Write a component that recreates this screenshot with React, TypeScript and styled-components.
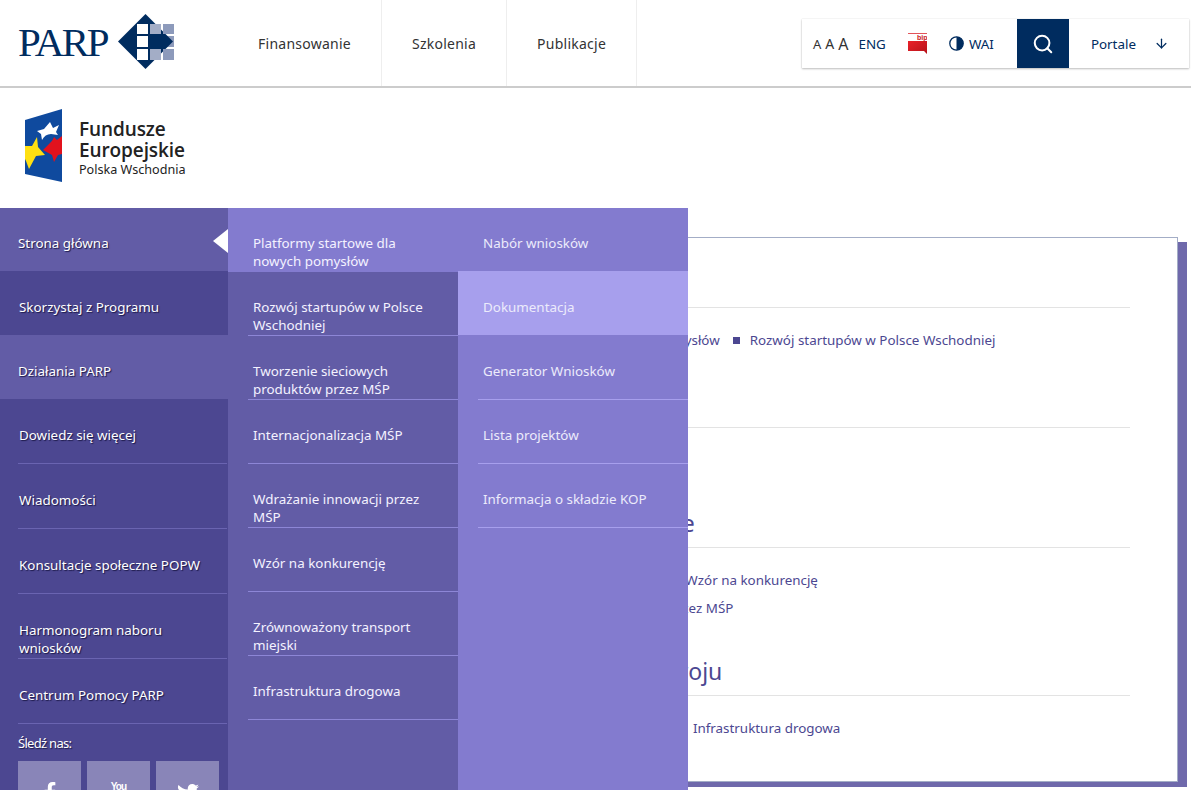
import React from "react";
import styled, { createGlobalStyle } from "styled-components";
import { FaFacebookF, FaTwitter } from "react-icons/fa";
import { ArrowDown, Search } from "lucide-react";

const GlobalStyle = createGlobalStyle`
    html, body {
        margin: 0;
        height: 100%;
        overflow: hidden;
        background: #fff;
        font-family: "Noto Sans", "Open Sans", sans-serif;
    }
`;

const Page = styled.div`
    position: relative;
    width: 1191px;
    height: 790px;
    overflow: hidden;
`;

const Header = styled.header`
    display: flex;
    align-items: flex-start;
    height: 86px;
    border-bottom: 2px solid #ccc;
`;

const Brand = styled.div`
    display: flex;
    align-items: center;
    width: 228px;
    height: 86px;
    padding: 0 0 2px 18px;
    box-sizing: border-box;
`;

const BrandName = styled.span`
    font-family: "Liberation Serif", serif;
    font-size: 41px;
    letter-spacing: -2.4px;
    color: #002c5f;
    width: 100px;
`;

const Nav = styled.nav`
    display: flex;
    flex: 1;
`;

const NavItem = styled.a`
    display: flex;
    align-items: center;
    height: 86px;
    padding: 0 30px;
    font-size: 14px;
    letter-spacing: 0.25px;
    color: #333;
    border-right: 1px solid #eee;
`;

const Tools = styled.div`
    display: flex;
    align-items: center;
    width: 387px;
    height: 49px;
    margin: 19px 2px 0 0;
    padding-left: 11px;
    box-sizing: border-box;
    background: #fff;
    box-shadow: 0 1px 2px rgba(0, 0, 0, 0.25), 0 0 1px rgba(0, 0, 0, 0.15);
    color: #002c5f;
    font-size: 13.4px;
`;

const FontSize = styled.span<{ size: number }>`
    font-size: ${p => p.size}px;
    margin-right: 4px;
    color: #333;
`;

const Eng = styled.span`
    margin: 0 22px 0 6px;
`;

const Wai = styled.span`
    display: flex;
    align-items: center;
    gap: 5px;
    margin-left: 22px;
    width: 68px;
`;

const SearchButton = styled.button`
    display: flex;
    align-items: center;
    justify-content: center;
    width: 52px;
    height: 49px;
    border: 0;
    padding: 0;
    background: #002c5f;
    color: #fff;
`;

const Portals = styled.span`
    display: flex;
    align-items: center;
    gap: 18px;
    margin-left: 22px;
`;

const FundsBand = styled.div`
    display: flex;
    align-items: flex-start;
    height: 102px;
    box-sizing: border-box;
    padding: 21px 0 0 25px;
    gap: 16px;
`;

const FundsText = styled.div`
    display: flex;
    flex-direction: column;
    padding-top: 10px;
    color: #222;
`;

const FundsTitle = styled.span`
    font-family: "Open Sans", sans-serif;
    font-size: 19px;
    line-height: 20.5px;
    font-weight: 600;
    letter-spacing: -0.1px;
`;

const FundsSub = styled.span`
    font-size: 12.6px;
    line-height: 20px;
`;

const Content = styled.main`
    display: flex;
    margin-top: 47px;
    justify-content: flex-end;
`;

const Card = styled.article`
    width: 780px;
    height: 545px;
    margin-right: 13px;
    padding: 0 47px 0 59px;
    box-sizing: border-box;
    background: #fff;
    border: 1px solid #a3adc6;
    box-shadow: 9px 5px 0 #6f69ab;
    color: #4c4791;
    font-size: 13.4px;
`;

const Title = styled.div<{ height: number }>`
    display: flex;
    align-items: flex-end;
    height: ${p => p.height}px;
    box-sizing: border-box;
    border-bottom: 1px solid #e3e3e3;
`;

const Heading = styled.h2`
    margin: 0 0 8px;
    font-size: 23px;
    font-weight: 400;
    line-height: 32px;
    letter-spacing: -0.05px;
    white-space: nowrap;
`;

const LinkList = styled.div<{ height: number; ruled?: boolean }>`
    height: ${p => p.height}px;
    box-sizing: border-box;
    padding-top: 18px;
    white-space: nowrap;
    border-bottom: ${p => (p.ruled ? "1px solid #e3e3e3" : "0")};
`;

const LinkLine = styled.div`
    display: flex;
    align-items: center;
    height: 28px;
`;

const Bullet = styled.i`
    width: 7px;
    height: 7px;
    margin: 0 10px 0 13px;
    background: #4c4791;
`;

const Menu = styled.div`
    position: absolute;
    left: 0;
    top: 208px;
    display: grid;
    grid-template-columns: 228px 230px 230px;
    height: 582px;
    color: #fff;
    font-size: 13.4px;
    line-height: 18px;
`;

const MainColumn = styled.div`
    background: #4c4791;
    text-shadow: 1px 1px 1px #1d1a4a;
`;

const SubColumn = styled.div`
    background: #625ca6;
    color: #f4f2ff;
`;

const ThirdColumn = styled.div`
    background: #837bcf;
    color: #ecebfb;
`;

const MainItem = styled.a<{ active?: boolean; rows: number; ruled?: boolean }>`
    position: relative;
    display: flex;
    align-items: flex-start;
    height: ${p => p.rows}px;
    box-sizing: border-box;
    padding: ${p => (p.rows === 63 ? 26 : 27)}px 28px 0 ${p => (p.active ? 18 : 19)}px;
    background: ${p => (p.active ? "#625ca6" : "transparent")};
    &::after {
        content: "";
        display: ${p => (p.ruled ? "block" : "none")};
        position: absolute;
        left: 18px;
        right: 1px;
        bottom: 0;
        height: 1px;
        background: #6a64b1;
    }
`;

const Pointer = styled.i`
    position: absolute;
    right: 0;
    top: 21px;
    border: 12px solid transparent;
    border-left: 0;
    border-right: 15px solid #fff;
`;

const SubItem = styled.a<{ active?: boolean; ruled?: boolean; rule?: string }>`
    position: relative;
    display: flex;
    align-items: flex-start;
    height: 64px;
    box-sizing: border-box;
    padding: 26px 20px 0 25px;
    background: ${p => (p.active ? "#837bcf" : "transparent")};
    &::after {
        content: "";
        display: ${p => (p.ruled ? "block" : "none")};
        position: absolute;
        left: 20px;
        right: 0;
        bottom: 0;
        height: 1px;
        background: ${p => p.rule ?? "#8d86d6"};
    }
`;

const HoverItem = styled(SubItem)`
    margin: -1px 0 1px;
    padding-top: 27px;
    background: #a79fed;
`;

const FollowLabel = styled.div`
    padding: 10px 0 0 18px;
    font-size: 13px;
    letter-spacing: -0.7px;
    line-height: 18px;
`;

const Socials = styled.div`
    display: flex;
    gap: 6px;
    margin: 9px 0 0 18px;
`;

const Social = styled.a`
    display: flex;
    flex-direction: column;
    align-items: center;
    width: 63px;
    height: 63px;
    padding-top: 21px;
    box-sizing: border-box;
    background: #8985b8;
    color: #fff;
    text-shadow: none;
`;

const YoutubeMark = styled.span`
    font-family: "Liberation Sans", sans-serif;
    font-size: 10px;
    font-weight: 700;
    letter-spacing: -0.9px;
    line-height: 9px;
`;

const main = [
    { label: "Strona główna", rows: 63, active: true, pointer: true },
    { label: "Skorzystaj z Programu", rows: 64 },
    { label: "Działania PARP", rows: 64, active: true },
    { label: "Dowiedz się więcej", rows: 65, ruled: true },
    { label: "Wiadomości", rows: 65, ruled: true },
    { label: "Konsultacje społeczne POPW", rows: 65, ruled: true },
    { label: "Harmonogram naboru wniosków", rows: 65, ruled: true },
    { label: "Centrum Pomocy PARP", rows: 65, ruled: true },
];

const sub = [
    "Platformy startowe dla nowych pomysłów",
    "Rozwój startupów w Polsce Wschodniej",
    "Tworzenie sieciowych produktów przez MŚP",
    "Internacjonalizacja MŚP",
    "Wdrażanie innowacji przez MŚP",
    "Wzór na konkurencję",
    "Zrównoważony transport miejski",
    "Infrastruktura drogowa",
];

const third = ["Generator Wniosków", "Lista projektów", "Informacja o składzie KOP"];

const ParpMark = () => (
    <svg width="57" height="57" viewBox="0 0 57 57">
        <path d="M27.5 0 L55 27.5 L27.5 55 L0 27.5 Z" fill="#002c5f" />
        <path d="M19 10h11v10H19zM19 22h11v11H19zM19 35h11v11H19z" fill="#fff" />
        <path d="M32 10h11v10H32zM32 35h11v11H32z" fill="#a3adc6" />
        <path d="M45 10h11v10H45zM45 22h11v11H45zM45 35h11v11H45z" fill="#8d9abb" />
        <path d="M30 22 H49.5 L55 27.5 L49.5 33 H30 Z" fill="#002c5f" />
    </svg>
);

const FundsMark = () => (
    <svg width="38" height="74" viewBox="0 0 38 74">
        <path d="M0 11 L37 0 V73 L0 65 Z" fill="#0f4a9e" />
        <path d="M25 13 L28 19 L34 16 L31 23 L33 26 L26 25 C22 25 19 27 17 31 L16 25 L12 22 L19 20 Z" fill="#fff" />
        <path d="M18 41 L24 35 C26 33 28 31 29 28 L32 31 L37 27 V45 L33 46 L29 53 L27 46 Z" fill="#e2121d" />
        <path d="M0 37 L7 37 L12 28 L13 38 L20 46 L11 47 L4 60 L1 52 L0 50 Z" fill="#ffe012" />
    </svg>
);

const BipMark = () => (
    <svg width="19" height="21" viewBox="0 0 19 21">
        <defs>
            <linearGradient id="bip-red" x1="0" y1="0" x2="1" y2="1">
                <stop offset="0" stopColor="#ea2129" />
                <stop offset="1" stopColor="#b5131a" />
            </linearGradient>
        </defs>
        <path d="M0 0h19v1H0z" fill="#e2545a" />
        <path d="M0 8h19v13l-3-3H0z" fill="url(#bip-red)" />
        <text x="9" y="7" fontFamily="Liberation Sans" fontSize="7" fontWeight="700" fill="#c8161d">
            bip
        </text>
    </svg>
);

const ContrastMark = () => (
    <svg width="15" height="15" viewBox="0 0 15 15">
        <circle cx="7.5" cy="7.5" r="6.7" fill="#fff" stroke="#002c5f" strokeWidth="1.3" />
        <path d="M7.5 .8a6.7 6.7 0 0 1 0 13.4z" fill="#002c5f" />
    </svg>
);

export default function App() {
    return (
        <Page>
            <GlobalStyle />
            <Header>
                <Brand>
                    <BrandName>PARP</BrandName>
                    <ParpMark />
                </Brand>
                <Nav>
                    <NavItem>Finansowanie</NavItem>
                    <NavItem>Szkolenia</NavItem>
                    <NavItem>Publikacje</NavItem>
                </Nav>
                <Tools>
                    <FontSize size={13}>A</FontSize>
                    <FontSize size={14}>A</FontSize>
                    <FontSize size={16}>A</FontSize>
                    <Eng>ENG</Eng>
                    <BipMark />
                    <Wai>
                        <ContrastMark />
                        WAI
                    </Wai>
                    <SearchButton>
                        <Search size={22} strokeWidth={2.2} />
                    </SearchButton>
                    <Portals>
                        Portale
                        <ArrowDown size={15} strokeWidth={2} />
                    </Portals>
                </Tools>
            </Header>
            <FundsBand>
                <FundsMark />
                <FundsText>
                    <FundsTitle>Fundusze</FundsTitle>
                    <FundsTitle>Europejskie</FundsTitle>
                    <FundsSub>Polska Wschodnia</FundsSub>
                </FundsText>
            </FundsBand>
            <Content>
                <Card>
                    <Title height={70} />
                    <LinkList height={120} ruled>
                        <LinkLine>
                            Platformy startowe dla nowych pomysłów
                            <Bullet />
                            Rozwój startupów w Polsce Wschodniej
                        </LinkLine>
                    </LinkList>
                    <Title height={120}>
                        <Heading>Innowacyjne wsparcie</Heading>
                    </Title>
                    <LinkList height={100}>
                        <LinkLine>
                            Wdrażanie innowacji przez MŚP
                            <Bullet />
                            Wzór na konkurencję
                        </LinkLine>
                        <LinkLine>Tworzenie sieciowych produktów przez MŚP</LinkLine>
                    </LinkList>
                    <Title height={48}>
                        <Heading>Oś priorytetowa rozwoju</Heading>
                    </Title>
                    <LinkList height={80}>
                        <LinkLine>
                            Zrównoważony transport miejski
                            <Bullet />
                            Infrastruktura drogowa
                        </LinkLine>
                    </LinkList>
                </Card>
            </Content>
            <Menu>
                <MainColumn>
                    {main.map(item => (
                        <MainItem key={item.label} active={item.active} ruled={item.ruled} rows={item.rows}>
                            {item.label}
                            {item.pointer && <Pointer />}
                        </MainItem>
                    ))}
                    <FollowLabel>Śledź nas:</FollowLabel>
                    <Socials>
                        <Social>
                            <FaFacebookF size={20} />
                        </Social>
                        <Social>
                            <YoutubeMark>You</YoutubeMark>
                        </Social>
                        <Social>
                            <FaTwitter size={22} />
                        </Social>
                    </Socials>
                </MainColumn>
                <SubColumn>
                    {sub.map((label, i) => (
                        <SubItem key={label} active={i === 0} ruled={i > 0}>
                            {label}
                        </SubItem>
                    ))}
                </SubColumn>
                <ThirdColumn>
                    <SubItem>Nabór wniosków</SubItem>
                    <HoverItem>Dokumentacja</HoverItem>
                    {third.map(label => (
                        <SubItem key={label} ruled rule="#a79fed">
                            {label}
                        </SubItem>
                    ))}
                </ThirdColumn>
            </Menu>
        </Page>
    );
}
